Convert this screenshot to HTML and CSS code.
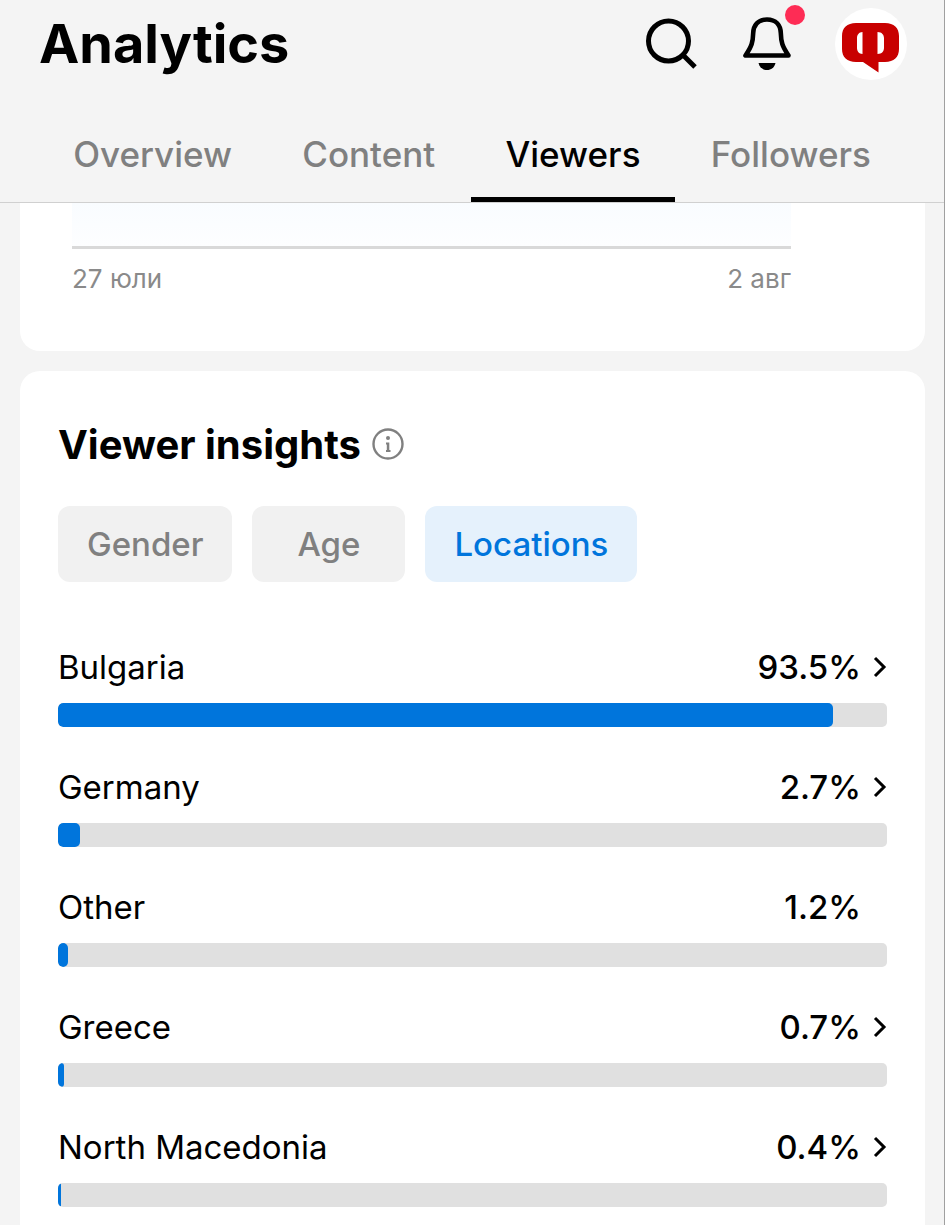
FILE: index.html
```html
<!DOCTYPE html>
<html lang="en">
<head>
    <meta charset="UTF-8">
    <meta name="viewport" content="width=device-width, initial-scale=1.0">
    <title>Analytics</title>
    <link rel="stylesheet" href="styles.css">
</head>
<body>
    <header class="header">
        <div class="top-bar">
            <h1>Analytics</h1>
            <div class="actions">
                <button type="button" class="icon-button" aria-label="Search">
                    <svg viewBox="0 0 56 56" fill="none" stroke="#000" stroke-width="5">
                        <circle cx="25.5" cy="25" r="20"/>
                        <path d="M39.5 38.5L52 51"/>
                    </svg>
                </button>
                <button type="button" class="icon-button" aria-label="Notifications">
                    <svg viewBox="0 0 56 56">
                        <path d="M28 3.5C19 3.5 14.500 9.500 14.200 17C13.900 26 13 30 6.500 39.500H49.500C43 30 42.100 26 41.800 17C41.500 9.500 37 3.500 28 3.500Z" fill="none" stroke="#000" stroke-width="4.6" stroke-linejoin="round"/>
                        <path d="M19.5 47H36.500C35.500 51.500 32 54 28 54S20.500 51.500 19.500 47Z"/>
                    </svg>
                    <span class="dot"></span>
                </button>
                <button type="button" class="avatar" aria-label="Profile">
                    <svg viewBox="0 0 72 72">
                        <path d="M21 15H50C59 15 64 20 64 28V41C64 49 59 54 50 54H43.500V64.500L28 54H21C12 54 7 49 7 41V28C7 20 12 15 21 15Z" fill="#c80000"/>
                        <path d="M27.500 24C24 24 22 27 22 30V40C22 43 24 46 27.500 46ZM42.500 24C47 24 49 27 49 30V40C49 43 47 46 42.500 46Z" fill="#fff"/>
                    </svg>
                </button>
            </div>
        </div>
        <nav class="tabs">
            <a href="#overview">Overview</a>
            <a href="#content">Content</a>
            <a href="#viewers" class="active">Viewers</a>
            <a href="#followers">Followers</a>
        </nav>
    </header>

    <main class="content">
        <section class="card chart-card">
            <div class="plot"></div>
            <div class="axis">
                <span>27 юли</span>
                <span>2 авг</span>
            </div>
        </section>

        <section class="card insights">
            <div class="card-title">
                <h2>Viewer insights</h2>
                <svg class="info" viewBox="0 0 32 32">
                    <circle cx="16" cy="15" r="14.5" fill="none" stroke="#808080" stroke-width="2.4"/>
                    <circle cx="16" cy="9" r="2" fill="#808080"/>
                    <path d="M14 13.5H17.300V21H18.500V23H14V21H14.800V15.500H14Z" fill="#808080"/>
                </svg>
            </div>
            <div class="chips">
                <button type="button">Gender</button>
                <button type="button">Age</button>
                <button type="button" class="selected">Locations</button>
            </div>
            <ul class="locations">
                <li>
                    <a href="#bulgaria">
                        <span class="name">Bulgaria</span>
                        <span class="value">93.5%</span>
                        <svg class="chevron" viewBox="0 0 16 24"><path d="M4 3L13 12L4 21"/></svg>
                    </a>
                    <div class="bar"><div class="fill" style="width: 93.5%"></div></div>
                </li>
                <li>
                    <a href="#germany">
                        <span class="name">Germany</span>
                        <span class="value">2.7%</span>
                        <svg class="chevron" viewBox="0 0 16 24"><path d="M4 3L13 12L4 21"/></svg>
                    </a>
                    <div class="bar"><div class="fill" style="width: 2.7%"></div></div>
                </li>
                <li>
                    <div class="plain">
                        <span class="name">Other</span>
                        <span class="value">1.2%</span>
                    </div>
                    <div class="bar"><div class="fill" style="width: 1.2%"></div></div>
                </li>
                <li>
                    <a href="#greece">
                        <span class="name">Greece</span>
                        <span class="value">0.7%</span>
                        <svg class="chevron" viewBox="0 0 16 24"><path d="M4 3L13 12L4 21"/></svg>
                    </a>
                    <div class="bar"><div class="fill" style="width: 0.7%"></div></div>
                </li>
                <li>
                    <a href="#north-macedonia">
                        <span class="name">North Macedonia</span>
                        <span class="value">0.4%</span>
                        <svg class="chevron" viewBox="0 0 16 24"><path d="M4 3L13 12L4 21"/></svg>
                    </a>
                    <div class="bar"><div class="fill" style="width: 0.4%"></div></div>
                </li>
            </ul>
        </section>
    </main>
</body>
</html>
```
FILE: styles.css
```css
* {
    box-sizing: border-box;
}
body {
    margin: 0;
    border-right: 1px solid #a0a0a0;
    background-color: #f4f4f4;
    color: #000;
    font-family: Inter, "Noto Sans", sans-serif;
}
h1, h2, ul {
    margin: 0;
    padding: 0;
}
a {
    color: inherit;
    text-decoration: none;
}
button {
    padding: 0;
    border: 0;
    background: none;
    font: inherit;
    cursor: pointer;
}
svg {
    display: block;
}

/* Header */
.header {
    border-bottom: 1px solid #d0d0d0;
}
.top-bar {
    display: flex;
    justify-content: space-between;
    align-items: center;
    height: 88px;
    padding: 0 37px 0 39px;
}
h1 {
    font-size: 54px;
    line-height: 88px;
}
.actions {
    display: flex;
    align-items: center;
    gap: 40px;
}
.icon-button {
    position: relative;
    width: 56px;
    height: 56px;
}
.dot {
    position: absolute;
    top: -11px;
    right: -10px;
    width: 20px;
    height: 20px;
    border-radius: 50%;
    background-color: #fe2c55;
}
.avatar {
    width: 72px;
    height: 72px;
    border-radius: 50%;
    background-color: #fff;
}
.tabs {
    display: flex;
    gap: 2px;
    padding: 0 39px;
}
.tabs a {
    flex: 1 1 auto;
    height: 114px;
    padding-top: 42px;
    border-bottom: 5px solid transparent;
    color: #808080;
    font-size: 35px;
    font-weight: 500;
    line-height: 48px;
    text-align: center;
}
.tabs .active {
    border-color: #000;
    color: #000;
}

/* Cards */
.content {
    padding: 0 19px 0 20px;
}
.card {
    background-color: #fff;
}
.chart-card {
    margin-bottom: 20px;
    padding: 0 134px 52px 52px;
    border-radius: 0 0 20px 20px;
}
.plot {
    height: 46px;
    border-bottom: 3px solid #d9d9d9;
    background: linear-gradient(#f9fcff, #fdfeff);
}
.axis {
    display: flex;
    justify-content: space-between;
    padding-top: 10px;
    color: #8a8a8a;
    font-size: 26px;
    line-height: 40px;
}
.insights {
    padding: 48px 38px 18px;
    border-radius: 20px 20px 0 0;
}
.card-title {
    display: flex;
    align-items: center;
    gap: 11px;
}
h2 {
    font-size: 40px;
    line-height: 52px;
}
.info {
    width: 32px;
    height: 32px;
    overflow: visible;
}

/* Filter chips */
.chips {
    display: flex;
    gap: 20px;
    margin-top: 35px;
}
.chips button {
    min-width: 153px;
    height: 76px;
    padding: 0 29px;
    border-radius: 12px;
    background-color: #f1f1f1;
    color: #808080;
    font-size: 33px;
    font-weight: 500;
}
.chips .selected {
    background-color: #e5f1fc;
    color: #0075dc;
}

/* Location list */
.locations {
    display: grid;
    gap: 36px;
    margin-top: 61px;
    list-style: none;
}
.locations a, .plain {
    display: flex;
    align-items: center;
    margin-bottom: 12px;
    font-size: 33px;
    line-height: 48px;
}
.plain {
    padding-right: 26px;
}
.name {
    flex: 1;
}
.value {
    font-weight: 500;
}
.chevron {
    width: 16px;
    height: 24px;
    margin-left: 10px;
    fill: none;
    stroke: #000;
    stroke-width: 3;
}
.bar {
    height: 24px;
    border-radius: 5px;
    background-color: #e0e0e0;
    overflow: hidden;
}
.fill {
    height: 100%;
    border-radius: 5px;
    background-color: #0075dc;
}
```
